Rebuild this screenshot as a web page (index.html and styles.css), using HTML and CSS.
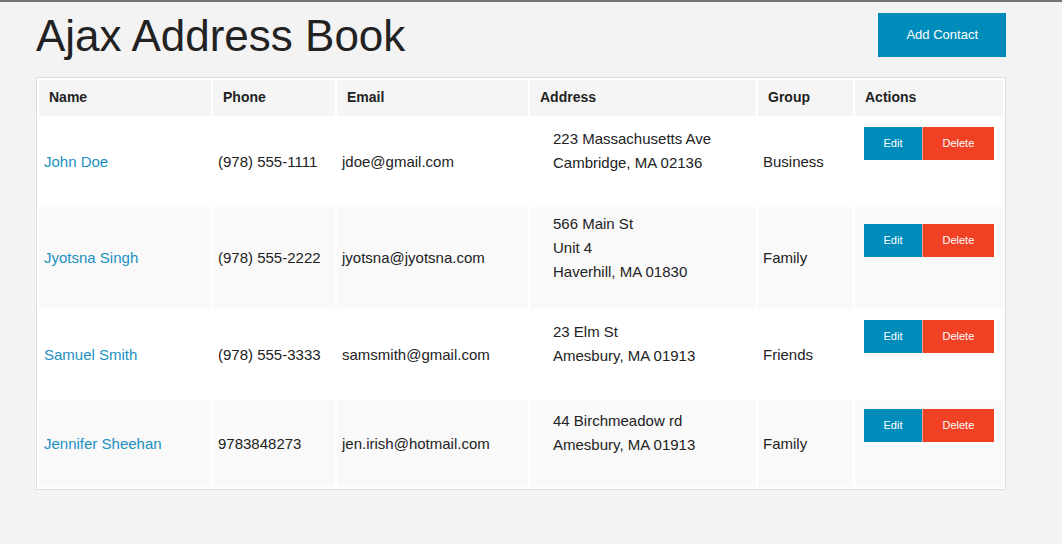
FILE: index.html
```html
<!DOCTYPE html>
<html lang="en">
<head>
<meta charset="utf-8">
<title>Ajax Address Book</title>
<link rel="stylesheet" href="styles.css">
</head>
<body>
<div class="page">
  <header class="top">
    <h1 class="title">Ajax Address Book</h1>
    <a class="btn-add" href="#">Add Contact</a>
  </header>
  <table class="contacts">
    <colgroup>
      <col class="c-name"><col class="c-phone"><col class="c-email"><col class="c-addr"><col class="c-group"><col class="c-actions">
    </colgroup>
    <thead>
      <tr><th>Name</th><th>Phone</th><th>Email</th><th>Address</th><th>Group</th><th>Actions</th></tr>
    </thead>
    <tbody>
      <tr>
        <td><a class="name" href="#">John Doe</a></td>
        <td>(978) 555-1111</td>
        <td>jdoe@gmail.com</td>
        <td class="addr"><p>223 Massachusetts Ave<br>Cambridge, MA 02136</p></td>
        <td>Business</td>
        <td class="actions"><div class="btn-group"><a class="btn edit" href="#">Edit</a><a class="btn del" href="#">Delete</a></div></td>
      </tr>
      <tr class="alt">
        <td><a class="name" href="#">Jyotsna Singh</a></td>
        <td>(978) 555-2222</td>
        <td>jyotsna@jyotsna.com</td>
        <td class="addr"><p>566 Main St<br>Unit 4<br>Haverhill, MA 01830</p></td>
        <td>Family</td>
        <td class="actions"><div class="btn-group"><a class="btn edit" href="#">Edit</a><a class="btn del" href="#">Delete</a></div></td>
      </tr>
      <tr>
        <td><a class="name" href="#">Samuel Smith</a></td>
        <td>(978) 555-3333</td>
        <td>samsmith@gmail.com</td>
        <td class="addr"><p>23 Elm St<br>Amesbury, MA 01913</p></td>
        <td>Friends</td>
        <td class="actions"><div class="btn-group"><a class="btn edit" href="#">Edit</a><a class="btn del" href="#">Delete</a></div></td>
      </tr>
      <tr class="alt">
        <td><a class="name" href="#">Jennifer Sheehan</a></td>
        <td>9783848273</td>
        <td>jen.irish@hotmail.com</td>
        <td class="addr"><p>44 Birchmeadow rd<br>Amesbury, MA 01913</p></td>
        <td>Family</td>
        <td class="actions"><div class="btn-group"><a class="btn edit" href="#">Edit</a><a class="btn del" href="#">Delete</a></div></td>
      </tr>
    </tbody>
  </table>
</div>
</body>
</html>
```
FILE: styles.css
```css
html, body {
  margin: 0;
  padding: 0;
}
body {
  background: #f3f3f3;
  border-top: 2px solid #747474;
  font-family: "Liberation Sans", Arial, sans-serif;
  color: #222;
  min-height: 542px;
}
.page {
  width: 970px;
  margin-left: 36px;
}
.top {
  display: flex;
  justify-content: space-between;
  align-items: flex-start;
  height: 75px;
}
.title {
  margin: 12px 0 0;
  font-size: 44px;
  line-height: 44px;
  font-weight: normal;
  color: #222;
}
.btn-add {
  margin-top: 11px;
  background: #008cba;
  color: #fff;
  text-decoration: none;
  font-size: 13px;
  line-height: 15px;
  padding: 14px 28px 15px;
}
.contacts {
  width: 970px;
  table-layout: fixed;
  border-collapse: separate;
  border-spacing: 2px;
  border: 1px solid #ddd;
  background: #fff;
}
.c-name { width: 172px; }
.c-phone { width: 122px; }
.c-email { width: 191px; }
.c-addr { width: 226px; }
.c-group { width: 95px; }
.c-actions { width: 148px; }
.contacts th {
  background: #f5f5f5;
  text-align: left;
  font-size: 14px;
  font-weight: bold;
  line-height: 18px;
  padding: 8px 10px 10px;
  color: #222;
}
.contacts td {
  font-size: 15px;
  line-height: 18px;
  padding: 4.5px 5px;
  vertical-align: middle;
  color: #222;
}
.contacts tr.alt td {
  background: #f9f9f9;
}
.name {
  color: #1b90c2;
  text-decoration: none;
}
.contacts td.addr p {
  margin: 0 0 21px;
  padding-left: 18px;
  line-height: 24px;
}
.contacts td.actions {
  padding: 9px 9px;
}
.btn-group {
  display: flex;
  margin-bottom: 36px;
}
.btn {
  display: block;
  color: #fff;
  text-decoration: none;
  font-size: 11px;
  line-height: 13px;
  padding: 10px 19.5px 10px;
}
.btn.edit {
  background: #008cba;
}
.btn.del {
  background: #f04124;
  border-left: 1px solid rgba(255, 255, 255, 0.5);
}
```
